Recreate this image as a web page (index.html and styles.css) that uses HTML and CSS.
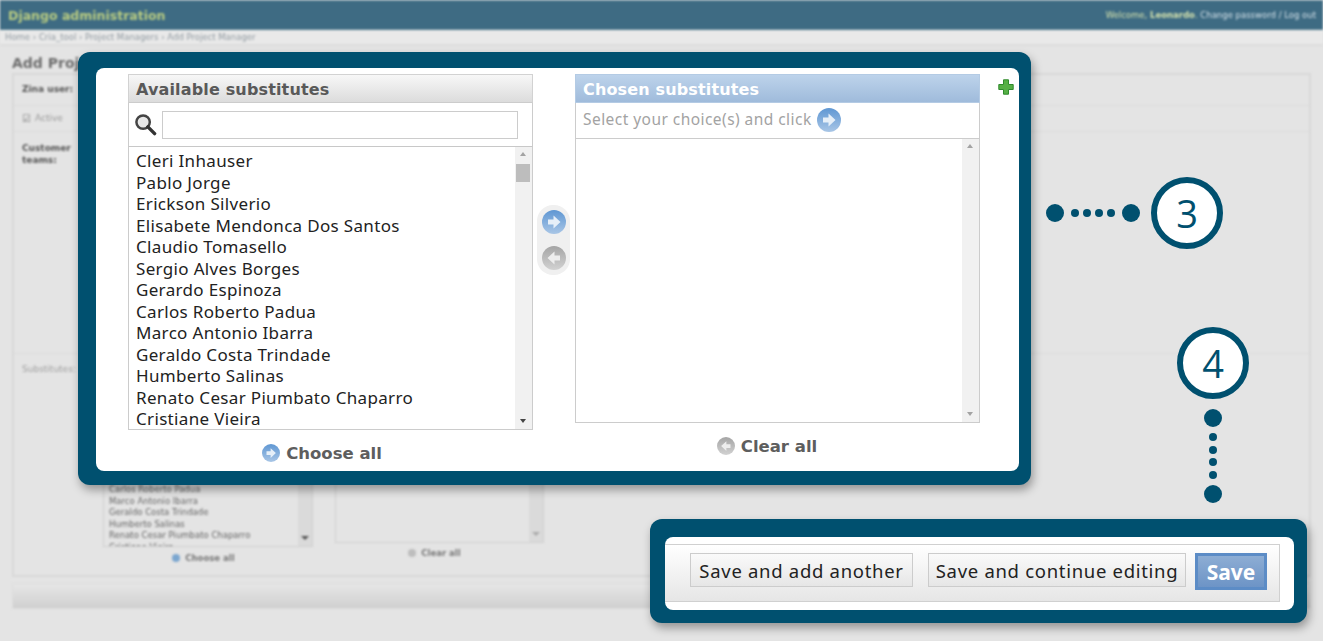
FILE: index.html
```html
<!DOCTYPE html>
<html lang="en">
<head>
<meta charset="utf-8">
<title>Add Project Manager</title>
<link rel="stylesheet" href="styles.css">
</head>
<body>
<svg class="defs" width="0" height="0" aria-hidden="true">
  <defs>
    <linearGradient id="blueDisc" x1="0" y1="0" x2="0" y2="1"><stop offset="0" stop-color="#5f97d3"/><stop offset="1" stop-color="#a9c6e6"/></linearGradient>
    <linearGradient id="greyDisc" x1="0" y1="0" x2="0" y2="1"><stop offset="0" stop-color="#a5a5a5"/><stop offset="1" stop-color="#d2d2d2"/></linearGradient>
    <symbol id="go-right" viewBox="0 0 24 24"><circle cx="12" cy="12" r="12" fill="url(#blueDisc)"/><path d="M6 9.500h5.500V5.500l7 6.500-7 6.500v-4H6z" fill="#e6eff8"/></symbol>
    <symbol id="go-left" viewBox="0 0 24 24"><circle cx="12" cy="12" r="12" fill="url(#greyDisc)"/><path d="M18 9.500h-5.500V5.500l-7 6.500 7 6.500v-4H18z" fill="#ededed"/></symbol>
  </defs>
</svg>

<div class="backdrop">
  <header class="topbar">
    <span class="brand">Django administration</span>
    <span class="user">Welcome, <b>Leonardo</b>. <i>Change password / Log out</i></span>
  </header>
  <nav class="crumbs">Home › Cria_tool › Project Managers › Add Project Manager</nav>
  <main class="content">
    <h1 class="page-title">Add Project Manager</h1>
    <div class="module">
      <div class="row row-user"><b>Zina user:</b></div>
      <div class="row row-active"><span class="tick">☑</span>Active</div>
      <div class="row row-teams"><b>Customer<br>teams:</b></div>
      <div class="row row-subs">
        <span class="subs-label">Substitutes:</span>
        <div class="mini-col mini-left">
          <div class="mini-list mini-list-a">
            <p>Carlos Roberto Padua</p><p>Marco Antonio Ibarra</p><p>Geraldo Costa Trindade</p><p>Humberto Salinas</p><p>Renato Cesar Piumbato Chaparro</p><p>Cristiane Vieira</p>
            <span class="mini-bar"><span class="mini-arrow"></span></span>
          </div>
          <div class="mini-link"><span class="mini-dot blue"></span>Choose all</div>
        </div>
        <div class="mini-col mini-right">
          <div class="mini-list mini-list-b"><span class="mini-bar"><span class="mini-arrow faint"></span></span></div>
          <div class="mini-link"><span class="mini-dot"></span>Clear all</div>
        </div>
      </div>
    </div>
    <div class="submit-strip"></div>
  </main>
</div>

<section class="callout selector-panel">
  <div class="selector">
    <div class="box box-available">
      <h2 class="box-title">Available substitutes</h2>
      <div class="search-row">
        <svg class="lens" viewBox="0 0 24 24" width="23" height="23"><circle cx="9.500" cy="9.500" r="7" fill="#e9e9e9" stroke="#444" stroke-width="2.600"/><path d="M14.500 14.500l7 7" stroke="#333" stroke-width="3.600" stroke-linecap="round"/></svg>
        <div class="search-input"></div>
      </div>
      <div class="list list-available">
        <ul class="names">
          <li>Cleri Inhauser</li><li>Pablo Jorge</li><li>Erickson Silverio</li><li>Elisabete Mendonca Dos Santos</li><li>Claudio Tomasello</li><li>Sergio Alves Borges</li><li>Gerardo Espinoza</li><li>Carlos Roberto Padua</li><li>Marco Antonio Ibarra</li><li>Geraldo Costa Trindade</li><li>Humberto Salinas</li><li>Renato Cesar Piumbato Chaparro</li><li>Cristiane Vieira</li>
        </ul>
        <div class="scrollbar"><span class="arrow up"></span><span class="thumb"></span><span class="arrow down"></span></div>
      </div>
      <a class="all-link choose-all"><svg width="18" height="18"><use href="#go-right"/></svg>Choose all</a>
    </div>

    <div class="movers">
      <svg width="24" height="24"><use href="#go-right"/></svg>
      <svg width="24" height="24"><use href="#go-left"/></svg>
    </div>

    <div class="box box-chosen">
      <h2 class="box-title chosen-title">Chosen substitutes</h2>
      <div class="help-row"><span class="help-text">Select your choice(s) and click</span> <svg width="24" height="24"><use href="#go-right"/></svg></div>
      <div class="list list-chosen">
        <div class="scrollbar light"><span class="arrow up"></span><span class="arrow down"></span></div>
      </div>
      <a class="all-link clear-all"><svg width="18" height="18"><use href="#go-left"/></svg>Clear all</a>
    </div>

    <svg class="plus" viewBox="0 0 16 16" width="16" height="16"><path d="M5.500 .8h5v4.700h4.700v5h-4.700v4.700h-5v-4.700H.8v-5h4.700z" fill="#56b045" stroke="#2f8a2c"/></svg>
  </div>
</section>

<div class="step step-three">
  <span class="dot big"></span><span class="dot"></span><span class="dot"></span><span class="dot"></span><span class="dot"></span><span class="dot big"></span>
  <span class="badge">3</span>
</div>

<div class="step step-four">
  <span class="badge">4</span>
  <span class="dot big"></span><span class="dot"></span><span class="dot"></span><span class="dot"></span><span class="dot"></span><span class="dot big"></span>
</div>

<section class="callout save-panel">
  <div class="save-inner">
    <div class="submit-row">
      <button class="btn btn-add" type="button">Save and add another</button>
      <button class="btn btn-continue" type="button">Save and continue editing</button>
      <button class="btn btn-save" type="button">Save</button>
    </div>
  </div>
</section>
</body>
</html>
```
FILE: styles.css
```css
* { box-sizing: border-box; }
html, body { margin: 0; height: 641px; overflow: hidden; }
body { background: #e4e4e4; font-family: "DejaVu Sans", sans-serif; color: #333; position: relative; }
.defs { position: absolute; }

.backdrop { filter: blur(0.8px); height: 641px; color: #7c7c7c; font-size: 9px; }
.topbar { height: 30px; background: #3e6b83; border-top: 1px solid #688a9c; border-bottom: 1px solid #5c8294; display: flex; align-items: center; justify-content: space-between; padding: 0 7px 0 8px; }
.brand { color: #b9cc82; font-size: 12.500px; font-weight: bold; }
.user { color: #d4e2ae; font-size: 8.500px; }
.user i { font-style: normal; color: #d2e0e8; }
.crumbs { height: 16px; background: #e9e9e9; border-bottom: 2px solid #dcdcdc; color: #929ba2; font-size: 8.500px; line-height: 15px; padding-left: 5px; }
.content { padding: 9px 12px 0 12px; }
.page-title { margin: 0 0 2px; height: 16px; font-size: 14px; line-height: 16px; font-weight: bold; color: #6e6e6e; }
.module { border: 2px solid #d8d8d8; height: 504px; }
.row { border-bottom: 1px solid #dcdcdc; padding-left: 8px; }
.row b { color: #555; }
.row-user { height: 31px; padding-top: 9px; }
.row-active { height: 26px; padding-top: 7px; color: #999; display: flex; align-items: flex-start; gap: 4px; }
.tick { font-size: 10px; line-height: 11px; color: #7c7c7c; }
.row-teams { height: 222px; padding-top: 10px; line-height: 12px; }
.row-subs { border-bottom: 0; height: 221px; padding-top: 10px; display: flex; color: #a0a0a0; }
.subs-label { width: 81px; flex: none; }
.mini-col { display: flex; flex-direction: column; align-items: center; flex: none; }
.mini-left { width: 210px; margin-top: 10px; }
.mini-right { width: 209px; margin: 10px 0 0 22px; }
.mini-list { width: 100%; border: 1px solid #d0d0d0; padding: 109px 0 0 5px; overflow: hidden; position: relative; color: #666; }
.mini-list p { margin: 0; line-height: 11.500px; height: 11.500px; font-size: 8.500px; white-space: nowrap; }
.mini-list-a { height: 173px; }
.mini-list-b { height: 169px; }
.mini-bar { position: absolute; right: 0; top: 0; bottom: 0; width: 14px; background: #dadada; }
.mini-arrow { position: absolute; left: 3px; bottom: 6px; border: 4px solid transparent; border-bottom: 0; border-top: 4px solid #555; }
.mini-arrow.faint { border-top-color: #aaa; }
.mini-link { display: flex; align-items: center; gap: 5px; font-weight: bold; color: #777; height: 21px; font-size: 8.500px; padding-right: 9px; }
.mini-right .mini-link { height: 20px; padding-right: 10px; }
.mini-dot { width: 8px; height: 8px; border-radius: 50%; background: #bdbdbd; }
.mini-dot.blue { background: #7ba6cf; }
.submit-strip { margin-top: 6px; height: 26px; background: linear-gradient(#e6e6e6, #d0d0d0); border: 1px solid #dcdcdc; }

.callout { position: absolute; background: #00506f; box-shadow: 2px 5px 10px rgba(0, 0, 0, .35); border-radius: 12px; }
.selector-panel { left: 78px; top: 52px; width: 953px; height: 433px; padding: 16px 12px 14px 18px; }
.selector { height: 100%; background: #fff; border-radius: 8px; padding: 6px 0 0 32px; display: flex; align-items: flex-start; position: relative; }
.box { width: 405px; display: flex; flex-direction: column; }
.box-title { margin: 0; height: 29px; font-size: 16px; line-height: 29px; font-weight: bold; padding-left: 7px; color: #595959; background: linear-gradient(#f7f7f7, #dcdcdc); border: 1px solid #d2d2d2; border-bottom-color: #ccc; letter-spacing: .15px; }
.chosen-title { color: #fff; background: linear-gradient(#bdd3eb, #9fbbdb); border-color: #b4cbe4; }
.search-row { height: 44px; border: 1px solid #ccc; border-top: 0; border-bottom-color: #c8c8c8; display: flex; align-items: center; gap: 5px; padding: 0 14px 0 5px; }
.lens { flex: none; }
.search-input { flex: 1; height: 28px; border: 1px solid #ccc; }
.list { position: relative; border: 1px solid #ccc; border-top: 0; }
.list-available { height: 283px; overflow: hidden; }
.list-chosen { height: 284px; }
.names { list-style: none; margin: 0; padding: 3px 0 0 7px; font-family: "Noto Sans", sans-serif; font-size: 17px; line-height: 21.500px; color: #222; letter-spacing: .33px; }
.names li { height: 21.500px; white-space: nowrap; }
.scrollbar { position: absolute; right: 0; top: 0; bottom: 0; width: 17px; background: #f1f1f1; }
.arrow { position: absolute; left: 5px; width: 0; height: 0; border: 3.500px solid transparent; }
.arrow.up { top: 5px; border-top: 0; border-bottom: 4px solid #a3a3a3; }
.arrow.down { bottom: 6px; border-bottom: 0; border-top: 4px solid #444; }
.light .arrow.down { border-top-color: #a3a3a3; }
.thumb { position: absolute; left: 1px; top: 17px; width: 14px; height: 18px; background: #bdbdbd; }
.all-link { display: flex; align-items: center; justify-content: center; gap: 6px; font-size: 16.500px; font-weight: bold; color: #5e5e5e; }
.choose-all { margin-top: 12px; height: 22px; padding-right: 17px; }
.clear-all { margin-top: 12px; height: 22px; padding-right: 21px; }
.movers { width: 42px; height: 70px; margin-top: 131px; flex: none; display: flex; flex-direction: column; align-items: center; padding: 5px 4px; gap: 12px; position: relative; }
.movers::before { content: ""; position: absolute; left: 4px; right: 5px; top: 0; bottom: 0; background: #f0f0f0; border-radius: 16px; }
.movers svg { position: relative; }
.help-row { height: 36px; border: 1px solid #ccc; border-top: 0; display: flex; align-items: center; gap: 5px; padding-left: 7px; color: #a3a3a3; font-family: "Noto Sans", sans-serif; font-size: 15.500px; letter-spacing: .45px; }
.help-text { margin-top: -4px; }
.help-row svg { flex: none; margin-top: -2px; }
.plus { position: absolute; left: 902px; top: 11px; }

.step { position: absolute; display: flex; align-items: center; }
.dot { width: 8px; height: 8px; border-radius: 50%; background: #00506f; flex: none; }
.dot.big { width: 18px; height: 18px; }
.badge { width: 72px; height: 72px; border-radius: 50%; background: #fff; border: 6px solid #00506f; color: #00506f; display: flex; align-items: center; justify-content: center; font-size: 38px; font-family: "Open Sans", sans-serif; font-weight: 400; flex: none; }
.step-three { left: 1046px; top: 177px; height: 72px; gap: 4px; }
.step-three .dot.big + .dot { margin-left: 3px; }
.step-three .dot + .dot.big { margin-left: 3px; }
.step-three .badge { margin-left: 7px; }
.step-four { left: 1177px; top: 327px; width: 72px; flex-direction: column; gap: 4.500px; }
.step-four .badge { margin-bottom: 5px; }
.step-four .dot.big + .dot { margin-top: 2px; }
.step-four .dot + .dot.big { margin-top: 2px; }

.save-panel { left: 650px; top: 519px; width: 657px; height: 104px; padding: 18px 13px 13px 15px; }
.save-inner { height: 73px; background: #fff; border-radius: 8px; padding: 7px 14px 8px 0; }
.submit-row { height: 58px; border: 1px solid #d0d0d0; border-left: 0; background: linear-gradient(#fff, #e6e6e6); display: flex; align-items: flex-start; padding: 8px 0 0 25px; }
.btn { height: 34px; font-family: "Noto Sans", sans-serif; font-size: 18.500px; color: #222; background: linear-gradient(#fafafa, #e6e6e6); border: 1px solid #ccc; padding: 0; letter-spacing: .7px; }
.btn-add { width: 223px; }
.btn-continue { width: 258px; margin-left: 15px; }
.btn-save { width: 72px; height: 37px; margin-left: 9px; color: #fff; font-weight: bold; font-size: 21px; background: linear-gradient(#8dadd4, #6d94c6); border: 3px solid #5c8cc6; letter-spacing: 0; }
```
